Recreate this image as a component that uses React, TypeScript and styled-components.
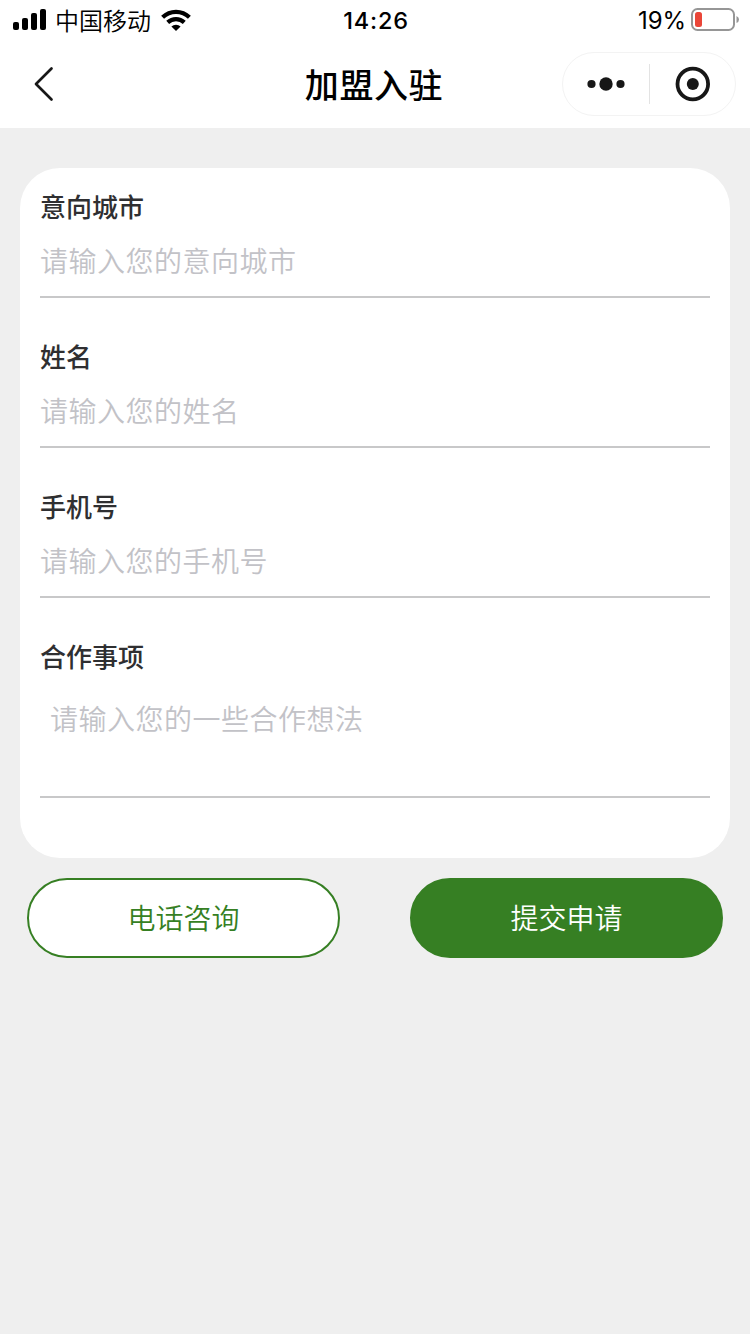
import React from "react";
import styled, { createGlobalStyle } from "styled-components";

const GlobalStyle = createGlobalStyle`
  html, body { margin: 0; padding: 0; background: #efefef; }
  *, *::before, *::after { box-sizing: border-box; }
  body { font-family: Inter, "Noto Sans CJK SC", sans-serif; }
`;

const Page = styled.div`
  width: 750px;
  min-height: 1334px;
  display: flex;
  flex-direction: column;
  background: #efefef;
`;

const StatusBar = styled.div`
  display: grid;
  grid-template-columns: 1fr auto 1fr;
  align-items: center;
  height: 40px;
  padding: 0 11px 0 13px;
  background: #fff;
  color: #000;
`;

const StatusGroup = styled.div<{ $end?: boolean }>`
  display: flex;
  align-items: center;
  justify-content: ${(p) => (p.$end ? "flex-end" : "flex-start")};
  height: 40px;
`;

const Carrier = styled.span`
  margin: 0 10px 0 8px;
  font: 350 24px/40px "Noto Sans CJK SC", sans-serif;
`;

const Clock = styled.span`
  padding-top: 2px;
  font-size: 23.5px;
  font-weight: 550;
  line-height: 38px;
  letter-spacing: 0.8px;
`;

const Percent = styled.span`
  margin-right: 5px;
  padding-top: 2px;
  font-size: 24px;
  line-height: 38px;
  letter-spacing: -0.1px;
`;

const NavBar = styled.header`
  display: grid;
  grid-template-columns: 188px 1fr 188px;
  align-items: center;
  height: 88px;
  padding-bottom: 1px;
  background: #fff;
`;

const BackButton = styled.button`
  width: 60px;
  height: 60px;
  padding: 0 0 0 29px;
  border: 0;
  background: none;
  display: flex;
  align-items: center;
`;

const Title = styled.h1`
  margin: 0;
  padding: 0 2px 1px 0;
  text-align: center;
  color: #000;
  font: 500 34px/59px "Noto Sans CJK SC", sans-serif;
  letter-spacing: 0.6px;
`;

const Capsule = styled.div`
  display: flex;
  align-items: center;
  width: 174px;
  height: 64px;
  border: 1px solid #f3f3f3;
  border-radius: 32px;
`;

const CapsuleAction = styled.div`
  flex: 1;
  display: flex;
  align-items: center;
  justify-content: center;
`;

const CapsuleDivider = styled.div`
  width: 1px;
  height: 40px;
  background: #e3e3e3;
`;

const Card = styled.main`
  display: flex;
  flex-direction: column;
  gap: 40px;
  height: 690px;
  margin: 40px 20px 0;
  padding: 20px 20px 0;
  border-radius: 40px;
  background: #fff;
`;

const Field = styled.div<{ $tall?: boolean }>`
  display: flex;
  flex-direction: column;
  height: ${(p) => (p.$tall ? 160 : 110)}px;
  border-bottom: 2px solid #c8c8c9;
`;

const Label = styled.div`
  height: 36px;
  color: #2f2f31;
  font: 500 26px/36px "Noto Sans CJK SC", sans-serif;
`;

const Placeholder = styled.div<{ $inset?: boolean }>`
  padding: ${(p) => (p.$inset ? "24px 0 0 10px" : "16px 0 0")};
  color: #c2c2c7;
  font: 350 28px/40px "Noto Sans CJK SC", sans-serif;
  letter-spacing: 0.5px;
`;

const Actions = styled.div`
  display: flex;
  justify-content: space-between;
  margin: 20px 27px 0;
`;

const ActionButton = styled.button<{ $filled?: boolean }>`
  width: 313px;
  height: 80px;
  padding: 0 0 2px;
  border: 2px solid #367f23;
  border-radius: 40px;
  background: ${(p) => (p.$filled ? "#367f23" : "#fff")};
  color: ${(p) => (p.$filled ? "#fff" : "#367f23")};
  font: 350 28px/40px "Noto Sans CJK SC", sans-serif;
`;

const SignalIcon = () => (
  <svg width="34" height="22" viewBox="0 0 34 22">
    <rect x="0" y="13" width="6" height="8" rx="2" />
    <rect x="9" y="9" width="6" height="12" rx="2" />
    <rect x="18" y="4" width="6" height="17" rx="2" />
    <rect x="27" y="0" width="6" height="21" rx="2" />
  </svg>
);

const WifiIcon = () => (
  <svg width="30" height="22" viewBox="0 0 30 22">
    <g fill="none" stroke="#000" strokeWidth="4.2">
      <path d="M1.6 8.2A19.3 19.3 0 0 1 28.4 8.2" />
      <path d="M6.7 13.4A12.2 12.2 0 0 1 23.3 13.4" />
    </g>
    <path d="M10.4 17.6A6.8 6.8 0 0 1 19.6 17.6L15 22Z" />
  </svg>
);

const BatteryIcon = () => (
  <svg width="48" height="24" viewBox="0 0 48 24">
    <rect x="1" y="1" width="42" height="21" rx="5.5" fill="none" stroke="#969696" strokeWidth="2" />
    <rect x="4" y="4" width="7" height="15" rx="2.5" fill="#ea4638" />
    <path d="M45.5 8Q48 9 48 11.5T45.5 15Z" fill="#969696" />
  </svg>
);

const BackIcon = () => (
  <svg width="30" height="36" viewBox="0 0 30 36">
    <path
      d="M22.5 2.5L7 18L22.5 33.5"
      fill="none"
      stroke="#171717"
      strokeWidth="2.7"
      strokeLinecap="round"
      strokeLinejoin="round"
    />
  </svg>
);

const MoreIcon = () => (
  <svg width="38" height="14" viewBox="0 0 38 14" fill="#171717">
    <circle cx="4.5" cy="7" r="4.1" />
    <circle cx="19" cy="7" r="6.7" />
    <circle cx="33.5" cy="7" r="4.1" />
  </svg>
);

const CloseIcon = () => (
  <svg width="36" height="36" viewBox="0 0 36 36">
    <circle cx="18.8" cy="18" r="15.3" fill="none" stroke="#171717" strokeWidth="3.8" />
    <circle cx="18.8" cy="18" r="6" fill="#171717" />
  </svg>
);

const fields = [
  { label: "意向城市", hint: "请输入您的意向城市" },
  { label: "姓名", hint: "请输入您的姓名" },
  { label: "手机号", hint: "请输入您的手机号" },
  { label: "合作事项", hint: "请输入您的一些合作想法", tall: true },
];

export default function App() {
  return (
    <Page>
      <GlobalStyle />
      <StatusBar>
        <StatusGroup>
          <SignalIcon />
          <Carrier>中国移动</Carrier>
          <WifiIcon />
        </StatusGroup>
        <Clock>14:26</Clock>
        <StatusGroup $end>
          <Percent>19%</Percent>
          <BatteryIcon />
        </StatusGroup>
      </StatusBar>
      <NavBar>
        <BackButton aria-label="返回">
          <BackIcon />
        </BackButton>
        <Title>加盟入驻</Title>
        <Capsule>
          <CapsuleAction>
            <MoreIcon />
          </CapsuleAction>
          <CapsuleDivider />
          <CapsuleAction>
            <CloseIcon />
          </CapsuleAction>
        </Capsule>
      </NavBar>
      <Card>
        {fields.map((f) => (
          <Field key={f.label} $tall={f.tall}>
            <Label>{f.label}</Label>
            <Placeholder $inset={f.tall}>{f.hint}</Placeholder>
          </Field>
        ))}
      </Card>
      <Actions>
        <ActionButton>电话咨询</ActionButton>
        <ActionButton $filled>提交申请</ActionButton>
      </Actions>
    </Page>
  );
}
